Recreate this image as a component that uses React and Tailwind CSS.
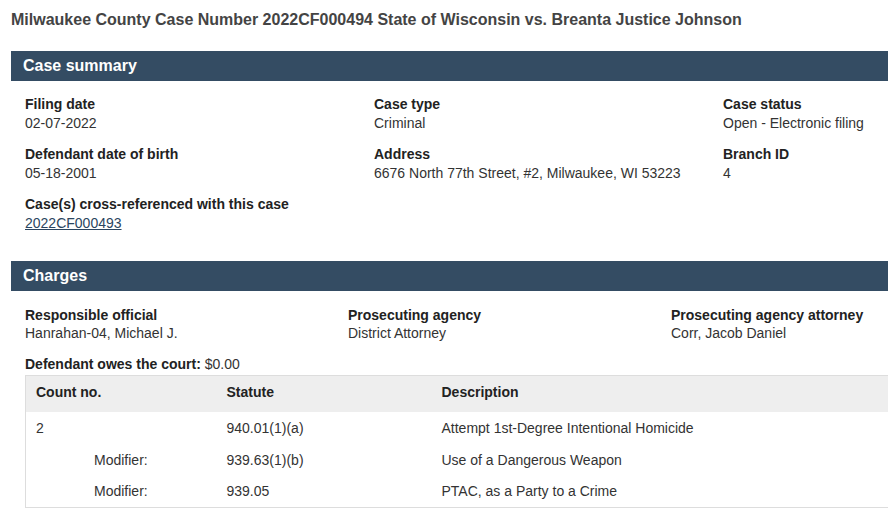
import React from 'react';

const summary = [
  [
    { label: 'Filing date', value: '02-07-2022' },
    { label: 'Case type', value: 'Criminal' },
    { label: 'Case status', value: 'Open - Electronic filing' },
  ],
  [
    { label: 'Defendant date of birth', value: '05-18-2001' },
    { label: 'Address', value: '6676 North 77th Street, #2, Milwaukee, WI 53223' },
    { label: 'Branch ID', value: '4' },
  ],
];

const officials = [
  { label: 'Responsible official', value: 'Hanrahan-04, Michael J.' },
  { label: 'Prosecuting agency', value: 'District Attorney' },
  { label: 'Prosecuting agency attorney', value: 'Corr, Jacob Daniel' },
];

const charges = [
  { count: '2', statute: '940.01(1)(a)', description: 'Attempt 1st-Degree Intentional Homicide' },
  { modifier: true, statute: '939.63(1)(b)', description: 'Use of a Dangerous Weapon' },
  { modifier: true, statute: '939.05', description: 'PTAC, as a Party to a Crime' },
];

const Field = ({ label, children }) => (
  <div>
    <div className="font-bold text-[#222]">{label}</div>
    <div className="text-[#333]">{children}</div>
  </div>
);

const SectionBar = ({ title }) => (
  <div className="h-[30px] bg-[#344c63] pl-[12px] flex items-center">
    <h2 className="text-white font-bold text-[16px]">{title}</h2>
  </div>
);

export default function App() {
  return (
    <div
      className="w-[888px] h-[522px] overflow-hidden bg-white text-[14px] leading-[18px]"
      style={{ fontFamily: '"Liberation Sans", Arial, sans-serif' }}
    >
      <div className="w-[1100px] pl-[11px]">
        <h1 className="pt-[10px] pb-[21px] text-[16px] leading-[20px] font-bold text-[#444]">
          Milwaukee County Case Number 2022CF000494 State of Wisconsin vs. Breanta Justice Johnson
        </h1>

        <SectionBar title="Case summary" />
        <div className="pl-[14px] pt-[14px] pb-[28px] flex flex-col gap-[12px] leading-[19px]">
          {summary.map((row, i) => (
            <div key={i} className="grid grid-cols-[349px_349px_349px]">
              {row.map((f) => (
                <Field key={f.label} label={f.label}>{f.value}</Field>
              ))}
            </div>
          ))}
          <Field label="Case(s) cross-referenced with this case">
            <a href="#" className="underline text-[#2b4560]">2022CF000493</a>
          </Field>
        </div>

        <SectionBar title="Charges" />
        <div className="pl-[14px] pt-[15px]">
          <div className="grid grid-cols-[323px_323px_323px]">
            {officials.map((f) => (
              <Field key={f.label} label={f.label}>{f.value}</Field>
            ))}
          </div>
          <div className="mt-[13px] text-[#333]">
            <span className="font-bold text-[#222]">Defendant owes the court:</span> $0.00
          </div>
          <table className="mt-[2px] w-[900px] border border-[#ddd] border-collapse text-left">
            <thead>
              <tr className="bg-[#eee] h-[36px]">
                <th className="w-[191px] pl-[10px] pb-[3px] font-bold text-[#222]">Count no.</th>
                <th className="w-[215px] pl-[10px] pb-[3px] font-bold text-[#222]">Statute</th>
                <th className="pl-[10px] pb-[3px] font-bold text-[#222]">Description</th>
              </tr>
            </thead>
            <tbody className="text-[#333]">
              {charges.map((c, i) => (
                <tr key={i} className="h-[32px]">
                  <td className={c.modifier ? 'pl-[68px]' : 'pl-[10px]'}>
                    {c.modifier ? 'Modifier:' : c.count}
                  </td>
                  <td className="pl-[10px]">{c.statute}</td>
                  <td className="pl-[10px]">{c.description}</td>
                </tr>
              ))}
            </tbody>
          </table>
        </div>
      </div>
    </div>
  );
}
